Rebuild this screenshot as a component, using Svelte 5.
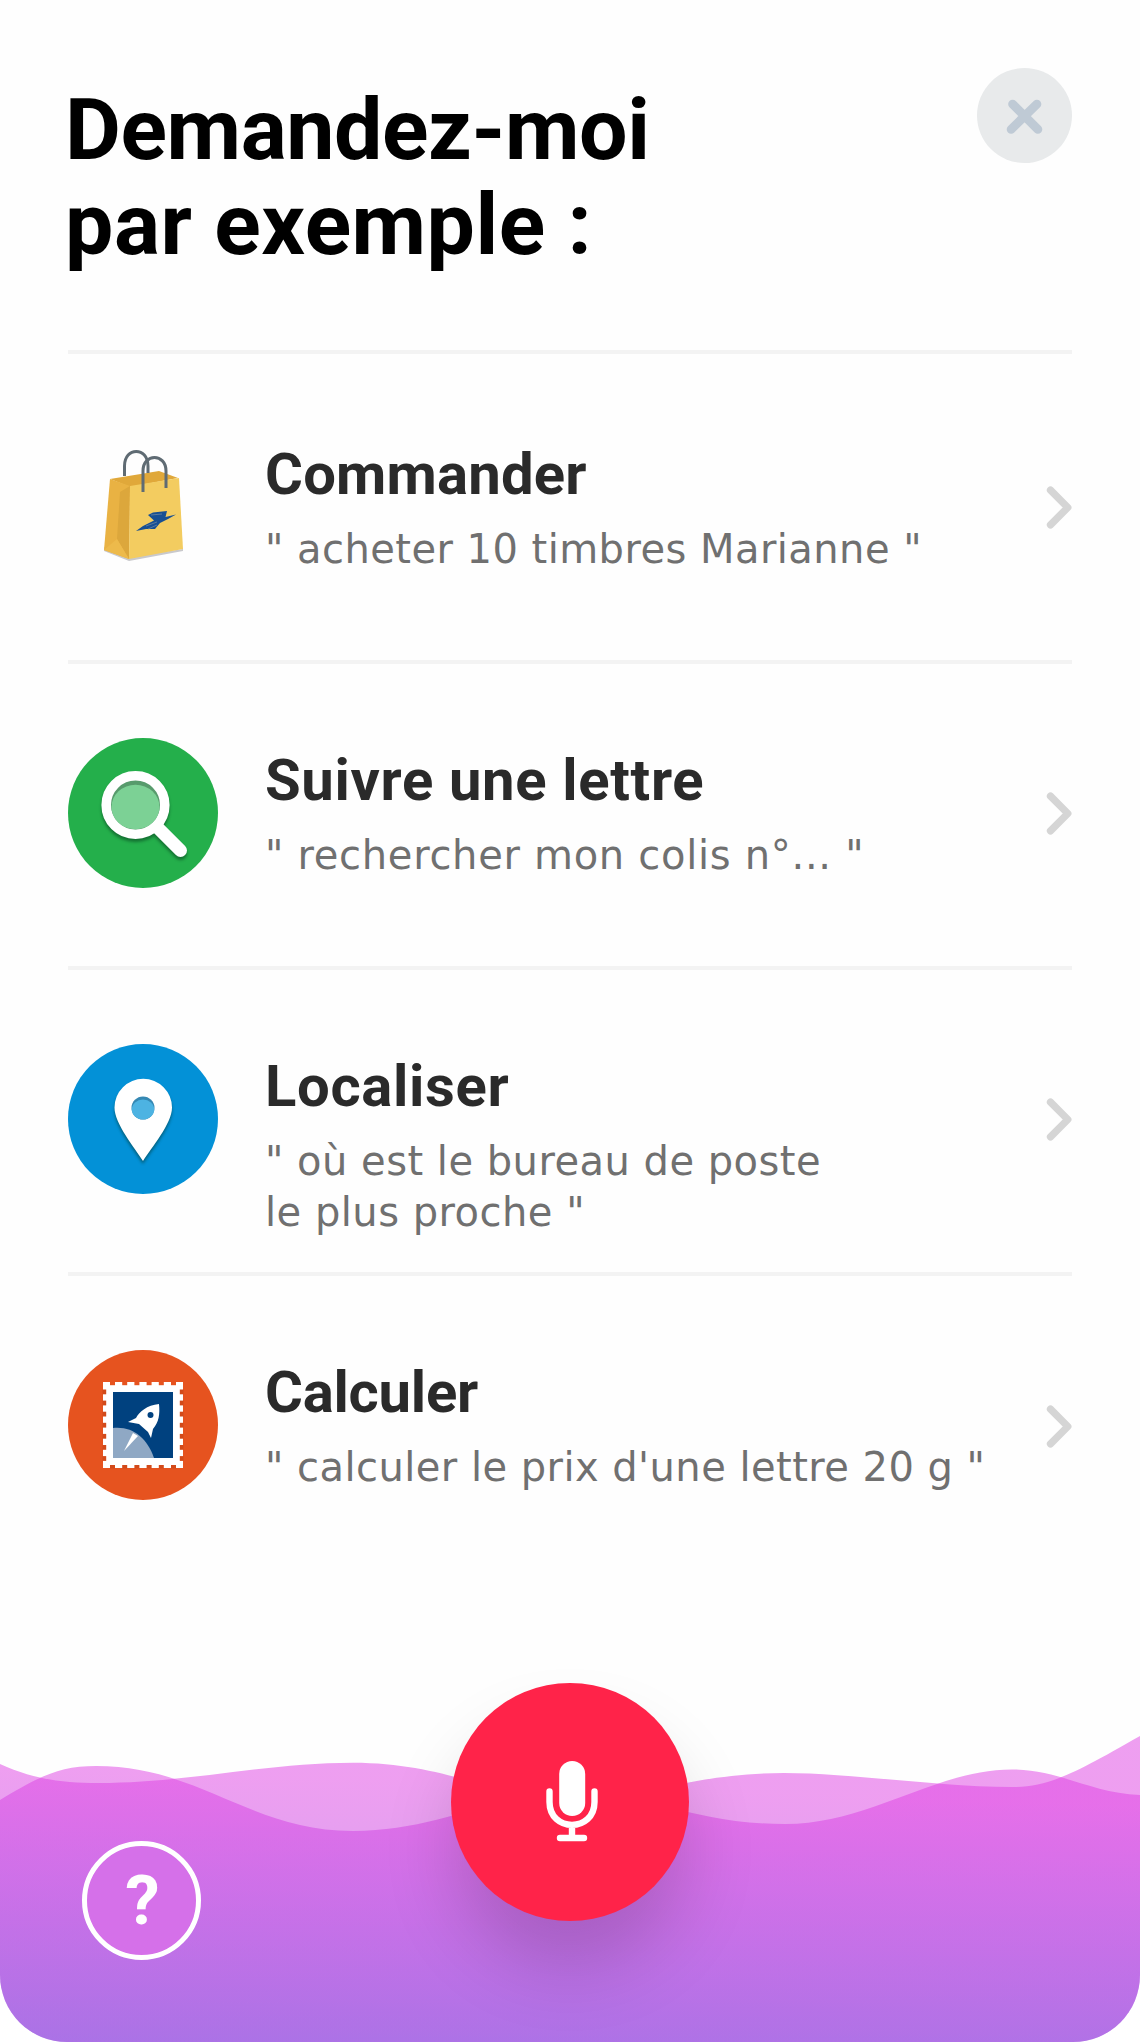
<script lang="ts">
  type Suggestion = {
    icon: 'bag' | 'search' | 'pin' | 'stamp';
    title: string;
    titleSpacing: number;
    lines: string[];
    lineSpacing: number;
  };

  const suggestions: Suggestion[] = [
    {
      icon: 'bag',
      title: 'Commander',
      titleSpacing: 0.2,
      lines: ['" acheter 10 timbres Marianne "'],
      lineSpacing: 0.45,
    },
    {
      icon: 'search',
      title: 'Suivre une lettre',
      titleSpacing: 0.66,
      lines: ['" rechercher mon colis n°... "'],
      lineSpacing: 0.7,
    },
    {
      icon: 'pin',
      title: 'Localiser',
      titleSpacing: 0.65,
      lines: ['" où est le bureau de poste', 'le plus proche "'],
      lineSpacing: 0.48,
    },
    {
      icon: 'stamp',
      title: 'Calculer',
      titleSpacing: -0.25,
      lines: ['" calculer le prix d\'une lettre 20 g "'],
      lineSpacing: 0.45,
    },
  ];

  // perforations around the stamp
  const teethX = [0, 1, 2, 3, 4, 5].map((i) => 42 + i * 12.2);
  const teethY = [0, 1, 2, 3, 4, 5, 6].map((i) => 39.5 + i * 11.1);
</script>

<main class="screen">
  <header>
    <h1>Demandez-moi<br /><span class="second">par exemple :</span></h1>
    <button class="close" aria-label="Fermer">
      <svg viewBox="0 0 96 96">
        <path d="M36 36.5 61.5 62M60.5 36.5 34.5 62" stroke="#bfcad5" stroke-width="9" stroke-linecap="round" />
      </svg>
    </button>
  </header>

  <ul class="list">
    {#each suggestions as item}
      <li class="row">
        <svg class="icon" viewBox="0 0 150 150">
          {#if item.icon === 'bag'}
            <path d="M36 119 61 129 115 119V117L61 125 36 115Z" fill="#c9c9cc" />
            <path d="M42 47 91 39 110 46 62 55Z" fill="#e0a83a" />
            <path d="M42 47 62 54 61 127 36 118Z" fill="#e9b243" />
            <path d="M62 54 52 60 49 107 61 127Z" fill="#dca73c" />
            <path d="M36 118 49 107 61 127Z" fill="#edba4b" />
            <path d="M62 54 111 46 115 117 61 127Z" fill="#f3cc60" />
            <path d="M56.500 44V34C56.500 14.500 80 14.500 80 34V41" fill="none" stroke="#5f6b73" stroke-width="3" />
            <path d="M75 60V39C75 21 98 21 98 39V56" fill="none" stroke="#5f6b73" stroke-width="3" />
            <path
              d="M80 83 85 80.500 99 79 97.500 85 108 82.500 100 87 92 91 87 97 78 97 68 99 75 94 86 88.500Z"
              fill="#174f93"
            />
            <path d="M78 94 89 90M83 83 94 82M80 97 89 93" stroke="#6d85a0" stroke-width=".8" />
          {:else if item.icon === 'search'}
            <circle cx="75" cy="75" r="75" fill="#24af4b" />
            <g class="icon-shadow">
              <circle cx="67.500" cy="67" r="26" fill="#579b6c" />
              <path d="M90 90 112.500 112.500" stroke="#fff" stroke-width="13" stroke-linecap="round" />
              <circle cx="67.500" cy="67" r="29.300" fill="none" stroke="#fff" stroke-width="9.600" />
            </g>
            <ellipse cx="67.500" cy="69" rx="24" ry="22.300" fill="#7cd195" />
          {:else if item.icon === 'pin'}
            <circle cx="75" cy="75" r="75" fill="#0391d7" />
            <g class="icon-shadow">
              <path
                d="M75 117C67 104 46.500 80 46.500 63.500A28.700 28.700 0 0 1 104 63.500C104 80 83 104 75 117Z"
                fill="#fff"
              />
            </g>
            <circle cx="75" cy="64" r="11.500" fill="#3588b3" />
            <ellipse cx="75" cy="65.500" rx="11.200" ry="10" fill="#4db3e2" />
          {:else}
            <circle cx="75" cy="75" r="75" fill="#e6531f" />
            <rect x="35" y="32" width="80" height="86" fill="#fff" />
            {#each teethX as x}
              <rect {x} y="31.500" width="5" height="3.700" fill="#e6531f" />
              <rect {x} y="115" width="5" height="3.500" fill="#d24a1a" />
            {/each}
            {#each teethY as y}
              <rect x="34.500" {y} width="3.700" height="4.800" fill="#d24a1a" />
              <rect x="111.800" {y} width="3.700" height="4.800" fill="#d24a1a" />
            {/each}
            <rect x="45" y="42" width="60" height="66" fill="#00417f" />
            <path d="M45 78C65 76 79 88 86 108H45Z" fill="#8fa8c4" />
            <path d="M91 54C79 55 71 62 68 68L60 72 71 74 80 82 83 88 85 79C91 72 92 64 91 54Z" fill="#fff" />
            <circle cx="82.500" cy="65" r="3" fill="#00417f" />
            <path d="M65 83 70 86 56 101Z" fill="#fff" />
          {/if}
        </svg>

        <div class="text">
          <h2 style:letter-spacing="{item.titleSpacing}px">{item.title}</h2>
          <p style:letter-spacing="{item.lineSpacing}px">
            {#each item.lines as line}
              <span class="line">{line}</span>
            {/each}
          </p>
        </div>

        <svg class="chevron" viewBox="0 0 27 43">
          <path
            d="M5.500 4.200 22.800 21.500 5.500 38.800"
            fill="none"
            stroke="#d5d5d5"
            stroke-width="7.300"
            stroke-linejoin="round"
            stroke-linecap="round"
          />
        </svg>
      </li>
    {/each}
  </ul>

  <footer>
    <svg class="waves" viewBox="0 1683 1140 359">
      <defs>
        <linearGradient id="wave" gradientUnits="userSpaceOnUse" x1="579" y1="1788" x2="571" y2="2052">
          <stop offset="0" stop-color="#de40e3" />
          <stop offset="1" stop-color="#9044de" />
        </linearGradient>
      </defs>
      <g fill="url(#wave)" fill-opacity=".5">
        <path
          d="M0 1764C35 1780 65 1783 98 1783C190 1783 265 1762.700 353 1762.700C450 1762.700 500 1800 570 1800C640 1800 690 1773 784 1773C850 1773 940 1787 1012 1787C1050 1787 1075 1773 1140 1736V2042H0Z"
        />
        <path
          d="M0 1800C40 1776 60 1766 96 1766C200 1766 250 1831 353 1831C440 1831 500 1792 570 1792C650 1792 690 1824 785 1824C870 1824 935 1769.500 1012 1769.500C1060 1769.500 1090 1793 1140 1795V2042H0Z"
        />
      </g>
    </svg>
    <button class="help" aria-label="Aide">?</button>
    <button class="mic" aria-label="Parler">
      <svg viewBox="451 1683 238 238">
        <rect x="559.200" y="1761" width="26" height="55" rx="13" fill="#fff" />
        <path
          d="M549.500 1791.500V1802C549.500 1832.500 594.500 1832.500 594.500 1802V1791.500M572 1825V1836M560 1838H584"
          fill="none"
          stroke="#fff"
          stroke-width="6.400"
          stroke-linecap="round"
        />
      </svg>
    </button>
  </footer>
</main>

<style>
  :global(body) {
    margin: 0;
    background: #fff;
  }

  .screen {
    box-sizing: border-box;
    display: flex;
    flex-direction: column;
    width: 1140px;
    height: 2042px;
    overflow: hidden;
    border-radius: 0 0 67px 67px;
    background: #fefefe;
    font-family: Roboto, sans-serif;
  }

  header {
    display: flex;
    justify-content: space-between;
    align-items: flex-start;
    box-sizing: border-box;
    height: 350px;
    padding: 68px 68px 0 65px;
  }

  h1 {
    margin: 14px 0 0;
    font-size: 86px;
    font-weight: 700;
    line-height: 95px;
    letter-spacing: -0.4px;
    color: #000;
    white-space: nowrap;
  }

  .second {
    letter-spacing: 0.5px;
  }

  button {
    padding: 0;
    border: 0;
    cursor: pointer;
  }

  .close {
    width: 95px;
    height: 95px;
    border-radius: 50%;
    background: #e8eaeb;
  }

  .close svg,
  .mic svg {
    display: block;
    width: 100%;
    height: 100%;
  }

  .list {
    margin: 0 68px;
    padding: 3.5px 0 0;
    border-top: 4px solid #f3f3f3;
    list-style: none;
  }

  .row {
    display: flex;
    align-items: flex-start;
    box-sizing: border-box;
    height: 306.2px;
    padding-top: 74px;
    border-bottom: 4px solid #f3f3f3;
  }

  .row:last-child {
    border-bottom-color: transparent;
  }

  .icon {
    flex: none;
    width: 150px;
    height: 150px;
  }

  .icon-shadow {
    filter: drop-shadow(0 3px 1.5px rgba(0, 40, 20, 0.45));
  }

  .text {
    flex: 1;
    margin-left: 47px;
    white-space: nowrap;
  }

  h2 {
    margin: 8px 0 0;
    font-size: 58px;
    font-weight: 700;
    line-height: 68px;
    color: #2a2a2a;
  }

  p {
    margin: 16px 0 0;
    font-family: "DejaVu Sans", sans-serif;
    font-size: 40px;
    line-height: 51px;
    color: #707070;
  }

  .line {
    display: block;
  }

  .chevron {
    flex: none;
    width: 27px;
    height: 43px;
    margin-top: 54.5px;
  }

  footer {
    position: relative;
    flex: none;
    display: grid;
    grid-template-columns: 1fr 238px 1fr;
    align-items: start;
    height: 359px;
    margin-top: auto;
  }

  .waves {
    position: absolute;
    inset: 0;
    width: 100%;
    height: 100%;
  }

  .help {
    position: relative;
    box-sizing: border-box;
    width: 119px;
    height: 119px;
    margin: 158px 0 0 82px;
    padding-left: 2px;
    border: 5px solid #fff;
    border-radius: 50%;
    background: #d570e9;
    font: 700 69px/109px Roboto, sans-serif;
    color: #fff;
  }

  .mic {
    position: relative;
    width: 238px;
    height: 238px;
    border-radius: 50%;
    background: #ff2349;
    box-shadow: 0 48px 72px -4px rgba(0, 0, 0, 0.17);
  }
</style>
